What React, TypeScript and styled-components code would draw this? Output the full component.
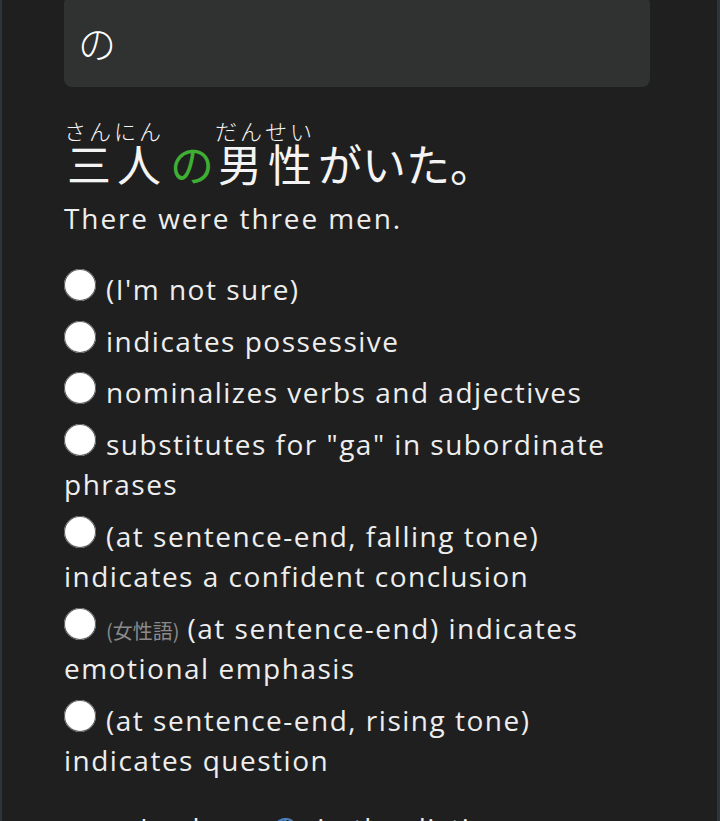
import React from "react";
import styled, { createGlobalStyle } from "styled-components";

const GlobalStyle = createGlobalStyle`
  html, body {
    margin: 0;
    padding: 0;
    background: #2a3540;
  }
  body {
    font-family: "Open Sans", "Noto Sans CJK JP", sans-serif;
    color: #eeeeee;
  }
`;

interface Choice {
  note?: string;
  text: string;
}

const choices: Choice[] = [
  { text: "(I'm not sure)" },
  { text: "indicates possessive" },
  { text: "nominalizes verbs and adjectives" },
  { text: 'substitutes for "ga" in subordinate phrases' },
  { text: "(at sentence-end, falling tone) indicates a confident conclusion" },
  { note: "(女性語)", text: "(at sentence-end) indicates emotional emphasis" },
  { text: "(at sentence-end, rising tone) indicates question" },
];

export default function App() {
  return (
    <Page>
      <GlobalStyle />
      <Column>
        <AnswerBox>の</AnswerBox>
        <Sentence>
          <Ruby>
            三人<rt>さんにん</rt>
          </Ruby>
          <Particle>の</Particle>
          <Ruby>
            男性<rt>だんせい</rt>
          </Ruby>
          がいた。
        </Sentence>
        <Translation>There were three men.</Translation>
        <ChoiceList>
          {choices.map((c, i) => (
            <ChoiceItem key={i}>
              <Radio type="radio" name="meaning" />
              {c.note && <Note>{c.note}</Note>}
              {c.text}
            </ChoiceItem>
          ))}
        </ChoiceList>
        <Footer>
          <span>Look up</span> <FooterLink>の</FooterLink>{" "}
          <span>in the dictionary</span>
        </Footer>
      </Column>
    </Page>
  );
}

const Page = styled.div`
  margin: 0 3px 0 2px;
  background: #1f1f1f;
  min-height: 100vh;
  overflow: hidden;
`;

const Column = styled.div`
  width: 586px;
  margin-left: 62px;
`;

const AnswerBox = styled.div`
  height: 91px;
  margin-top: -4px;
  box-sizing: border-box;
  padding: 0 14px;
  display: flex;
  align-items: center;
  background: #303131;
  border-radius: 8px;
  font-family: "Noto Sans CJK JP", sans-serif;
  font-size: 38px;
  font-weight: 300;
  color: #ffffff;
`;

const Sentence = styled.div`
  margin-top: 33px;
  font-family: "Noto Sans CJK JP", sans-serif;
  font-size: 44px;
  font-weight: 400;
  line-height: 50px;
  color: #f4f4f4;

  rt {
    font-size: 22px;
    line-height: 24px;
    letter-spacing: 3px;
    font-weight: 300;
  }
`;

const Ruby = styled.ruby`
  margin-right: 6px;
`;

const Particle = styled.span`
  color: #3fae34;
  margin: 0 4px 0 3px;
`;

const Translation = styled.p`
  margin: 10px 0 0;
  font-size: 28px;
  line-height: 40px;
  letter-spacing: 1.9px;
  color: #eeeeee;
`;

const ChoiceList = styled.ul`
  list-style: none;
  margin: 31px 0 0;
  padding: 0;
`;

const ChoiceItem = styled.li`
  font-size: 28px;
  line-height: 40.5px;
  letter-spacing: 1.5px;
  margin-bottom: 11px;
  color: #eeeeee;
`;

const Radio = styled.input`
  appearance: none;
  width: 32px;
  height: 32px;
  margin: 0 10px 0 0;
  border-radius: 50%;
  vertical-align: -1px;
  background: radial-gradient(circle at 55% 45%, #ffffff 62%, #e6e6e6 78%, #8c8c8c 100%);
  box-shadow: inset 0 0 0 1px #5a5a5a;
`;

const Note = styled.span`
  font-family: "Noto Sans CJK JP", sans-serif;
  font-size: 20px;
  line-height: 1;
  letter-spacing: 0;
  color: #8a8a8a;
  margin-right: 8px;
`;

const Footer = styled.p`
  margin: 26px 0 0;
  padding-left: 76px;
  font-size: 28px;
  line-height: 41px;
  letter-spacing: 1.4px;
  color: #eeeeee;
`;

const FooterLink = styled.span`
  font-family: "Noto Sans CJK JP", sans-serif;
  color: #4a7fc0;
  margin: 0 8px;
`;
